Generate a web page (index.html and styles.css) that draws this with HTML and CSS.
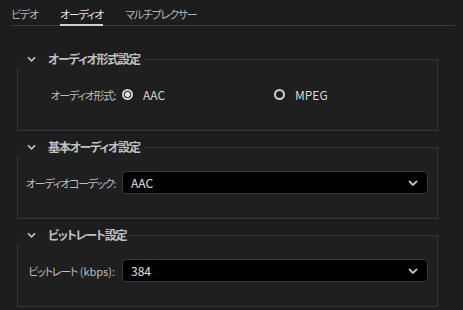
FILE: index.html
```html
<!DOCTYPE html>
<html lang="ja">

<head>
    <meta charset="UTF-8">
    <title>オーディオ設定</title>
    <link rel="stylesheet" href="styles.css">
</head>

<body>
    <div class="tabs">
        <span class="tab">ビデオ</span>
        <span class="tab active">オーディオ</span>
        <span class="tab">マルチプレクサー</span>
    </div>

    <!-- オーディオ形式 -->
    <fieldset class="section">
        <legend>
            <svg class="chev" viewBox="0 0 10 6"><polyline points="1,1 5,5 9,1" /></svg>
            <span class="title">オーディオ形式設定</span>
        </legend>
        <div class="row">
            <label class="lbl">オーディオ形式:</label>
            <div class="radios">
                <span class="opt"><i class="radio checked"></i>AAC</span>
                <span class="opt"><i class="radio"></i>MPEG</span>
            </div>
        </div>
    </fieldset>

    <!-- 基本オーディオ -->
    <fieldset class="section">
        <legend>
            <svg class="chev" viewBox="0 0 10 6"><polyline points="1,1 5,5 9,1" /></svg>
            <span class="title">基本オーディオ設定</span>
        </legend>
        <div class="row">
            <label class="lbl">オーディオコーデック:</label>
            <div class="select">
                <span>AAC</span>
                <svg class="chev" viewBox="0 0 10 6"><polyline points="1,1 5,5 9,1" /></svg>
            </div>
        </div>
    </fieldset>

    <!-- ビットレート -->
    <fieldset class="section">
        <legend>
            <svg class="chev" viewBox="0 0 10 6"><polyline points="1,1 5,5 9,1" /></svg>
            <span class="title">ビットレート設定</span>
        </legend>
        <div class="row">
            <label class="lbl">ビットレート<span class="latin"> (kbps):</span></label>
            <div class="select">
                <span>384</span>
                <svg class="chev" viewBox="0 0 10 6"><polyline points="1,1 5,5 9,1" /></svg>
            </div>
        </div>
    </fieldset>
</body>

</html>
```

FILE: styles.css
```css
body {
    margin: 0;
    background-color: #1d1d1d;
    color: #c4c4c4;
    font-family: "Noto Sans CJK JP", "Noto Sans", sans-serif;
    font-size: 12px;
    font-feature-settings: "palt";
    overflow: hidden;
}

.tabs {
    display: flex;
    gap: 22px;
    margin: 0 8px 0 11px;
    border-bottom: 1px solid #3a3a3a;
}

.tab {
    padding: 6px 0 2px;
    line-height: 16px;
    font-size: 11px;
    letter-spacing: -1.2px;
    color: #b4b4b4;
    border-bottom: 1px solid transparent;
}

.tab.active {
    color: #e4e4e4;
    border-bottom: 2px solid #d0d0d0;
    margin-bottom: -1px;
}

.section {
    margin: 0 25px 7px 17px;
    padding: 15px 9px 24px 9px;
    border: 1px solid #353535;
    background: #1f1f1f;
    min-width: 0;
}

.tabs + .section {
    margin-top: 24px;
}

.section legend {
    margin-left: -10px;
    padding: 0 4px 0 10px;
    line-height: 18px;
    font-weight: 700;
    color: #c0c0c0;
    display: flex;
    align-items: center;
    gap: 12px;
}

.title {
    letter-spacing: -1.2px;
}

.chev {
    width: 9px;
    height: 6px;
    fill: none;
    stroke: #c4c4c4;
    stroke-width: 1.8;
}

.row {
    display: grid;
    grid-template-columns: 88px 1fr;
    column-gap: 7px;
    align-items: center;
    height: 23px;
}

.lbl {
    text-align: right;
    white-space: nowrap;
    font-size: 11px;
    letter-spacing: -1.2px;
    color: #bdbdbd;
    justify-self: end;
}

.lbl .latin {
    letter-spacing: 0;
}

.radios {
    display: flex;
}

.opt {
    width: 152px;
    display: flex;
    align-items: center;
    gap: 10px;
    color: #d6d6d6;
}

.radio {
    width: 11px;
    height: 11px;
    box-sizing: border-box;
    border: 2px solid #d2d2d2;
    border-radius: 50%;
}

.radio.checked {
    background: radial-gradient(circle, #e0e0e0 0 2.3px, transparent 2.8px);
}

.select {
    height: 23px;
    box-sizing: border-box;
    background: #000;
    border: 1px solid #3a3a3a;
    border-radius: 4px;
    display: flex;
    align-items: center;
    justify-content: space-between;
    padding: 0 9px 0 8px;
    color: #e0e0e0;
}

.select .chev {
    width: 10px;
    stroke: #bdbdbd;
}
```
